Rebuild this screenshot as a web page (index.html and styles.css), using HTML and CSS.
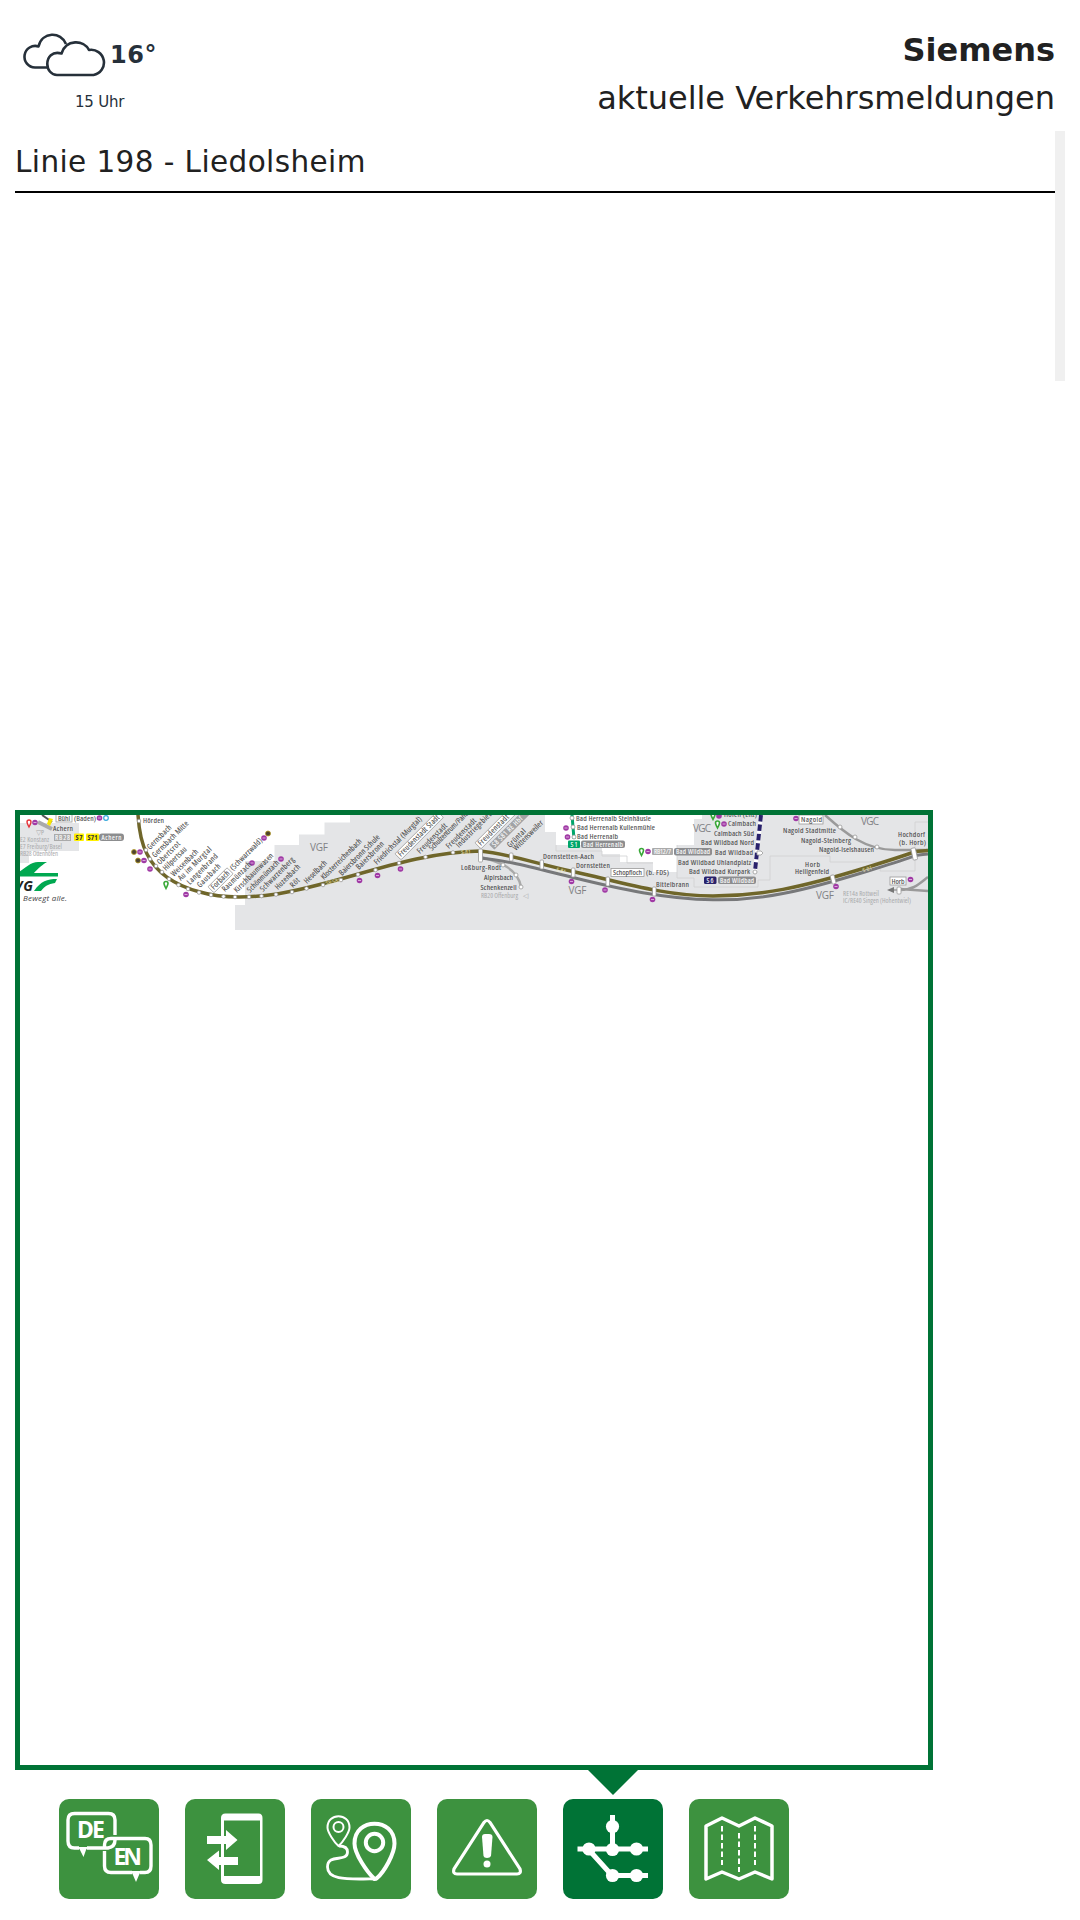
FILE: index.html
```html
<!DOCTYPE html>
<html lang="de">
<head>
<meta charset="utf-8">
<title>Siemens – aktuelle Verkehrsmeldungen</title>
<link rel="stylesheet" href="styles.css">
</head>
<body>
<header class="header">
  <div class="weather">
    <div class="weather-now">
      <svg class="weather-icon" viewBox="22 33 84 44" fill="none" stroke="#26303a" stroke-width="2.6" stroke-linejoin="round">
        <path d="M48 67.5H35A10.8 10.8 0 1 1 38.5 46.4C42 31.500 61 31 66 44"/>
        <path d="M57 75H93.500A12.300 12.300 0 1 0 89 50C84 39.500 66 39 61.500 53.500C52 51 47.300 57 47.300 64C47.300 70 51.500 75 57 75Z"/>
      </svg>
      <span class="temperature">16°</span>
    </div>
    <div class="hour">15 Uhr</div>
  </div>
  <div class="heading">
    <h1 class="stop">Siemens</h1>
    <p class="subject">aktuelle Verkehrsmeldungen</p>
  </div>
</header>
<main>
  <section class="messages">
    <h2 class="line"><span class="line-name">Linie 198 - Liedolsheim</span></h2>
    <div class="track"></div>
  </section>
  <section class="plan">
    <svg class="network" viewBox="20 815 908 115">
      <!-- tariff zones -->
      <path fill="#e4e5e7" d="M235 930V905H245V861H274.500V845H299V834.500H324.500V822.500H350V815H545V832H556V845H602V854H620V862H653V872H677V845H694V819H702V815H928V930Z"/>
      <path fill="#e4e5e7" d="M20 823H79V851H29V863H20Z"/>
      <path class="zone" d="M556 845V851H602V856H627V863H653M677 845V878H694V887H758V880H770V856H830V862H880V871H915V822H928"/>
      <g class="zone-name"><text x="310" y="851" textLength="18">VGF</text><text x="568.500" y="894" textLength="18">VGF</text><text x="693" y="831.500" textLength="18">VGC</text><text x="861" y="824.500" textLength="18">VGC</text><text x="816" y="899" textLength="18">VGF</text></g>
      <!-- side lines -->
      <path d="M481 857C499 862 518 868 521 887" fill="none" stroke="#aaa" stroke-width="2.500"/>
      <path d="M825 815C845 833 865 850 895 850H928M900 890C914 890 920 883 928 877M900 889L928 891" fill="none" stroke="#9a9a9a" stroke-width="2.500"/>
      <path d="M887 890L894 887V893Z" fill="#777"/><path d="M890 890H900" stroke="#777"/>
      <path d="M761 815L755 871" stroke="#fff" stroke-width="4"/>
      <path d="M761 815L755 871" stroke="#29226b" stroke-width="4" stroke-dasharray="6.500 3"/>
      <path d="M572 815L574 839" stroke="#00a66a" stroke-width="3"/>
      <!-- main line -->
      <path d="M480 858C505 860 530 867 575 878S665 899 713 899.800S800 892 868 871S905 857 928 854" fill="none" stroke="#77787a" stroke-width="3"/>
      <path d="M138 815C139 830 141 843 147 854C157 874 177 886 200 892C220 898 249 898 277 894C340 884 410 852 480 851C505 853 530 862 575 872S665 896 713 896S800 888 868 867S905 853 928 850.500" fill="none" stroke="#6f662a" stroke-width="3.500"/>
      <g fill="#fff" stroke="#999" stroke-width=".8">
        <circle cx="139" cy="821" r="1.800"/><circle cx="146" cy="850" r="1.800"/><circle cx="150" cy="859" r="1.800"/><circle cx="156" cy="866" r="1.800"/><circle cx="162" cy="872" r="1.800"/><circle cx="169" cy="879" r="1.800"/><circle cx="178.500" cy="885" r="1.800"/><circle cx="188" cy="889" r="1.800"/><circle cx="199" cy="892.500" r="1.800"/><circle cx="211" cy="895" r="1.800"/><circle cx="223.500" cy="896.500" r="1.800"/><circle cx="235" cy="897" r="1.800"/><circle cx="249" cy="897" r="1.800"/><circle cx="261.500" cy="896" r="1.800"/><circle cx="276" cy="894.500" r="1.800"/><circle cx="292" cy="892" r="1.800"/><circle cx="306.500" cy="888.500" r="1.800"/><circle cx="323" cy="885" r="1.800"/><circle cx="341" cy="880" r="1.800"/><circle cx="358" cy="874.500" r="1.800"/><circle cx="375.500" cy="870" r="1.800"/><circle cx="399" cy="863" r="1.800"/><circle cx="425.500" cy="857" r="1.800"/><circle cx="453" cy="852.500" r="1.800"/>
        <rect x="478.500" y="849" width="4" height="13" rx="1"/><rect x="509.500" y="853" width="3.500" height="8" rx="1"/><rect x="540" y="860" width="3.500" height="9" rx="1"/><rect x="571.500" y="868" width="3.500" height="9" rx="1"/><rect x="606" y="877" width="3.500" height="9" rx="1"/><rect x="652.500" y="887" width="3.500" height="9" rx="1"/><rect x="831" y="875" width="4" height="9" rx="1" transform="rotate(-15 833 879)"/><rect x="912" y="848" width="4.500" height="12" rx="1" transform="rotate(-12 914 854)"/><rect x="897" y="887" width="4" height="7" rx="1"/>
        <circle cx="503" cy="865" r="2"/><circle cx="516" cy="875" r="2"/><circle cx="521" cy="887" r="2"/><circle cx="840" cy="827" r="2"/><circle cx="855" cy="837" r="2"/><circle cx="877" cy="847" r="2"/><circle cx="572" cy="818" r="2"/><circle cx="573" cy="827" r="2"/><circle cx="574" cy="837" r="2"/>
        <circle cx="755" cy="872" r="2"/><path d="M757 851H761L763 853L761 855H757Z"/>
      </g>
      <g class="on-line"><text x="326" y="885" transform="rotate(-13 326 885)">S8·S81</text><text x="461" y="854">S·81</text><text transform="translate(556 871) rotate(14)">S·81</text><text transform="translate(863 872) rotate(-16)">S·81</text></g>
      <!-- interchange symbols -->
      <g fill="#a03aa5"><circle cx="35" cy="822.500" r="2.800"/><circle cx="99.500" cy="818" r="2.800"/><circle cx="140" cy="852" r="2.800"/><circle cx="144" cy="860.500" r="2.800"/><circle cx="150" cy="869" r="2.800"/><circle cx="186" cy="894.500" r="2.800"/><circle cx="252" cy="863" r="2.800"/><circle cx="264" cy="838" r="2.800"/><circle cx="281" cy="859" r="2.800"/><circle cx="359.500" cy="880.500" r="2.800"/><circle cx="377.500" cy="875.500" r="2.800"/><circle cx="400.500" cy="869" r="2.800"/><circle cx="566" cy="828" r="2.800"/><circle cx="567.500" cy="837" r="2.800"/><circle cx="571.500" cy="881.500" r="2.800"/><circle cx="605" cy="890" r="2.800"/><circle cx="652.500" cy="899.500" r="2.800"/><circle cx="648" cy="851.500" r="2.800"/><circle cx="719" cy="816" r="2.800"/><circle cx="724" cy="824" r="2.800"/><circle cx="796" cy="818.500" r="2.800"/><circle cx="836" cy="886.500" r="2.800"/><circle cx="910.500" cy="879.500" r="2.800"/></g>
      <path d="M33.500 822.500h3M98 818h3M138.500 852h3M142.500 860.500h3M148.500 869h3M184.500 894.500h3M250.500 863h3M262.500 838h3M279.500 859h3M358 880.500h3M376 875.500h3M399 869h3M564.500 828h3M566 837h3M570 881.500h3M603.500 890h3M651 899.500h3M646.500 851.500h3M722.500 824h3M794.500 818.500h3M834.500 886.500h3M909 879.500h3" stroke="#d9a6dc" stroke-width="1"/>
      <g fill="#4d4430" stroke="#b59a24" stroke-width=".8"><circle cx="134" cy="852" r="2.500"/><circle cx="138" cy="860.500" r="2.500"/><circle cx="268" cy="833.500" r="2.500"/></g>
      <circle cx="106" cy="818" r="2.300" fill="#fff" stroke="#35a8dc" stroke-width="1.200"/>
      <path d="M29 827C27.500 824 27 823 27 822A2 2 0 0 1 31 822C31 823 30.500 824 29 827Z" fill="#fff" stroke="#e5333a" stroke-width="1.400"/>
      <g fill="#fff" stroke="#39a838" stroke-width="1.600"><path id="park" d="M166 888.500C164.500 885.500 164 884.500 164 883.500A2 2 0 0 1 168 883.500C168 884.500 167.500 885.500 166 888.500Z"/><use href="#park" x="475.500" y="-33"/><use href="#park" x="551.500" y="-60.500"/><use href="#park" x="547" y="-69"/></g>
      <path d="M38 822L52 829" stroke="#aaa" stroke-width="4"/><path d="M42 815L52 822" stroke="#555" stroke-width="2"/><path d="M49 818L53 819L50 826L47 824Z" fill="#f7e600"/>
      <!-- slanted stop names -->
      <g class="stops">
        <text transform="translate(150 850) rotate(-45)" textLength="31">Gernsbach</text>
        <text transform="translate(155 858) rotate(-45)" textLength="48">Gernsbach Mitte</text>
        <text transform="translate(160 865) rotate(-45)" textLength="29">Obertsrot</text>
        <text transform="translate(166 871) rotate(-45)" textLength="30">Hilpertsau</text>
        <text transform="translate(174 877) rotate(-45)" textLength="35">Weisenbach</text>
        <text transform="translate(181 881) rotate(-45)" textLength="44">Au im Murgtal</text>
        <text transform="translate(190 885) rotate(-45)" textLength="40">Langenbrand</text>
        <text transform="translate(200 888) rotate(-45)" textLength="30">Gausbach</text>
        <g transform="translate(214 890) rotate(-45)"><rect class="frame" x="-2" y="-6.500" width="27" height="8.500" rx="1"/><text textLength="23">Forbach</text><text x="27" textLength="42">(Schwarzwald)</text></g>
        <text transform="translate(225 892) rotate(-45)" textLength="38">Raumünzach</text>
        <text transform="translate(237 893) rotate(-45)" textLength="52">Kirschbaumwasen</text>
        <text transform="translate(250 893) rotate(-45)" textLength="42">Schönmünzach</text>
        <text transform="translate(263 892) rotate(-45)" textLength="45">Schwarzenberg</text>
        <text transform="translate(278 890) rotate(-45)" textLength="32">Huzenbach</text>
        <text transform="translate(293 888) rotate(-45)" textLength="10">Röt</text>
        <text transform="translate(307 884) rotate(-45)" textLength="29">Heselbach</text>
        <text transform="translate(324 880) rotate(-45)" textLength="54">Klosterreichenbach</text>
        <text transform="translate(342 876) rotate(-45)" textLength="54">Baiersbronn Schule</text>
        <text transform="translate(359 870) rotate(-45)" textLength="36">Baiersbronn</text>
        <text transform="translate(377 865) rotate(-45)" textLength="64">Friedrichstal (Murgtal)</text>
        <g transform="translate(401 857) rotate(-45)"><rect class="frame" x="-2" y="-6.500" width="60" height="8.500" rx="1"/><text textLength="55">Freudenstadt Stadt</text></g>
        <text transform="translate(420 854) rotate(-45)" textLength="39">Freudenstadt</text>
        <text transform="translate(432 851) rotate(-45)" textLength="76">Schulzentrum/Panoramabad</text>
        <text transform="translate(449 849) rotate(-45)" textLength="39">Freudenstadt</text>
        <text transform="translate(459 848) rotate(-45)" textLength="46">Industriegebiet</text>
        <g transform="translate(481 846) rotate(-45)"><rect class="frame" x="-2" y="-6.500" width="57" height="8.500" rx="1"/><text textLength="40">Freudenstadt</text></g>
        <g transform="translate(494 848) rotate(-45)"><rect x="-1" y="-6" width="52" height="7.500" rx="1" fill="#a2a3a5"/><text class="light" x="1" textLength="40">S8 S81 RE Hbf</text></g>
        <text transform="translate(510 848) rotate(-45)" textLength="23">Grüntal</text>
        <text transform="translate(516 851) rotate(-45)" textLength="39">Wittensweiler</text>
      </g>
      <!-- upright stop names -->
      <g class="stops">
        <rect class="frame" x="56" y="811" width="16" height="11"/>
        <text x="58" y="820.500" textLength="12">Bühl</text><text x="74" y="820.500" textLength="22">(Baden)</text><text x="53" y="831" textLength="20">Achern</text><text x="143" y="823" textLength="21">Hörden</text>
        <text class="muted" x="36" y="835" textLength="8">▽P</text><text class="muted" x="20" y="842" textLength="29">E2 Konstanz</text><text class="muted" x="20" y="849" textLength="42">E7 Freiburg/Basel</text><text class="muted" x="20" y="856" textLength="38">RB28 Ottenhöfen</text>
        <rect x="54" y="834" width="17" height="7" fill="#aaa"/><text class="light" x="55" y="840" textLength="15">RB28</text>
        <rect x="74" y="833.500" width="10" height="7.500" rx="1" fill="#fff000"/><text class="route" x="75.500" y="840" textLength="7">S7</text><rect x="86" y="833.500" width="13" height="7.500" rx="1" fill="#fff000"/><text class="route" x="87.500" y="840" textLength="10">S71</text>
        <rect x="99" y="833.500" width="25" height="7.500" rx="3" fill="#8c8d8f"/><text class="light" x="101.500" y="840" textLength="20">Achern</text>
        <text x="461" y="870" textLength="40">Loßburg-Rodt</text><text x="484" y="880" textLength="29">Alpirsbach</text><text x="480.500" y="889.500" textLength="36">Schenkenzell</text><text class="muted" x="481" y="898" textLength="37">RB20 Offenburg</text><text class="muted" x="523" y="898">◁</text>
        <text x="576" y="820.500" textLength="75">Bad Herrenalb Steinhäusle</text><text x="577" y="830" textLength="78">Bad Herrenalb Kullenmühle</text><text x="577" y="839" textLength="41">Bad Herrenalb</text>
        <rect x="568" y="840.500" width="12" height="7.500" rx="1" fill="#00a66a"/><text class="light" x="570.500" y="847" textLength="7">S1</text><rect x="581" y="840.500" width="44" height="7.500" rx="2" fill="#8c8d8f"/><text class="light" x="583" y="847" textLength="40">Bad Herrenalb</text>
        <text x="543" y="859" textLength="51">Dornstetten-Aach</text><text x="576" y="868" textLength="34">Dornstetten</text><rect class="frame" x="611" y="868.500" width="33" height="8"/><text x="613" y="875" textLength="29">Schopfloch</text><text x="646" y="875" textLength="23">(b. FDS)</text><text x="656" y="887" textLength="33">Bittelbrann</text>
        <rect x="652" y="848" width="21" height="7" rx="1" fill="#aaa"/><text class="light" x="654" y="854" textLength="17">RB12/7</text><rect x="674" y="848" width="38" height="7.500" rx="2" fill="#8c8d8f"/><text class="light" x="676" y="854" textLength="34">Bad Wildbad</text><text x="715" y="855" textLength="38">Bad Wildbad</text>
        <text x="724" y="817" textLength="33">Höfen (Enz)</text><text x="728" y="826" textLength="28">Calmbach</text><text x="714" y="836" textLength="40">Calmbach Süd</text><text x="701" y="845" textLength="53">Bad Wildbad Nord</text><text x="678" y="865" textLength="73">Bad Wildbad Uhlandplatz</text><text x="689" y="874" textLength="61">Bad Wildbad Kurpark</text>
        <rect x="704" y="876.500" width="12.500" height="7.500" rx="1.500" fill="#29226b"/><text class="light" x="706.500" y="883" textLength="7">S6</text><rect x="718" y="876.500" width="38" height="7.500" rx="2" fill="#8c8d8f"/><text class="light" x="720" y="883" textLength="34">Bad Wildbad</text>
        <rect class="frame" x="799" y="815" width="24" height="9"/><text x="801" y="822" textLength="21">Nagold</text><text x="783" y="833" textLength="53">Nagold Stadtmitte</text><text x="801" y="842.500" textLength="50">Nagold-Steinberg</text><text x="819" y="852" textLength="55">Nagold-Iselshausen</text>
        <text x="805" y="867" textLength="15">Horb</text><text x="795" y="874" textLength="34">Heiligenfeld</text><text x="898" y="837" textLength="27">Hochdorf</text><text x="899" y="844.500" textLength="27">(b. Horb)</text><rect class="frame" x="890" y="877" width="16" height="8"/><text x="891.500" y="883.500" textLength="13">Horb</text>
        <text class="muted" x="843" y="896" textLength="36">RE14a Rottweil</text><text class="muted" x="843" y="903" textLength="68">IC/RE40 Singen (Hohentwiel)</text>
      </g>
      <!-- operator mark -->
      <path fill="#00a850" d="M16 873C22 872 29 862 38 862H47C40 866 36 871 34 873H58V876.500H20ZM34 891C41 881 47 879 57 879L55 883C48 884 45 886 41 891Z"/>
      <text class="operator" x="5" y="890.500" textLength="28">KVG</text><text class="slogan" x="23" y="901" textLength="44">Bewegt alle.</text>
    </svg>
  </section>
</main>
<nav class="menu">
  <button class="tile" aria-label="Sprache"><svg viewBox="0 0 100 100" fill="none" stroke="#fff" stroke-width="3.400">
    <path d="M56 36V21Q56 14.500 49.500 14.500H15.500Q9 14.500 9 21V42Q9 49 15.500 49H20M28 49H49Q56 48 56 41"/><path fill="#fff" stroke="none" d="M19 48H29L27 51L24.500 58L21 51Z"/>
    <path d="M45.500 52V67Q45.500 73.500 52 73.500H73M81 73.500H86Q92 73.500 92 67V46Q92 39.500 86 39.500H52Q45.500 39.500 45.500 46V48"/><path fill="#fff" stroke="none" d="M72 72H82L80 76L77 83L74 76Z"/>
    <text class="tile-text" x="18" y="38.500" textLength="28">DE</text><text class="tile-text" x="54.500" y="65.500" textLength="28.500">EN</text></svg></button>
  <button class="tile" aria-label="Übertragen"><svg viewBox="0 0 100 100" fill="#fff">
    <path fill-rule="evenodd" d="M40.500 14.500H73.500Q77.500 14.500 77.500 19V81Q77.500 85 73.500 85H40.500Q36 85 36 81V19Q36 14.500 40.500 14.500ZM39 21.500V77H75V21.500Z"/>
    <path d="M22 37H41V31L52.500 41L41 51V45H22ZM53 58H34V51.500L22 61L34 71V66H53Z"/></svg></button>
  <button class="tile" aria-label="Route"><svg viewBox="0 0 100 100" fill="none" stroke="#fff">
    <path stroke-width="2" d="M27.500 47C23 43 16.500 33 16.500 28.500C16.500 13.500 38.500 13.500 38.500 28.500C38.500 33 32 43 27.500 47Z"/><circle cx="27.500" cy="28" r="5" stroke-width="2"/>
    <path stroke-width="2.800" d="M28 47C33 47 36.500 49 36.500 53C36.500 64 16.500 54 16.500 68C16.500 83 43 79.500 64 80"/>
    <path stroke-width="4" stroke-linejoin="round" d="M63.500 80C56 73 43.500 55 43.500 44.500C43.500 18 83.500 18 83.500 44.500C83.500 55 73 73 66 79Q65 80 63.500 80Z"/><circle cx="63.500" cy="43.500" r="8.700" stroke-width="4"/></svg></button>
  <button class="tile" aria-label="Meldungen"><svg viewBox="0 0 100 100">
    <path fill="none" stroke="#fff" stroke-width="3.200" d="M47 23.500Q50 19.500 53 23.500L83 70Q84.500 75 80 75H20Q15.500 75 17 70Z"/>
    <path fill="#fff" d="M45 38Q45 35 48 35H52Q55.500 35 55.500 38L54 57Q53 59 50 59Q47 59 46.500 57Z"/><circle cx="50" cy="65" r="3.500" fill="#fff"/></svg></button>
  <button class="tile tile-active" aria-label="Liniennetz"><svg viewBox="0 0 100 100" fill="#fff" stroke="#fff">
    <path fill="none" stroke-width="5" d="M49.500 16V50M14.500 50H85M26 51L49 76.500H85"/>
    <g stroke="none"><circle cx="49.500" cy="27.500" r="6.600"/><circle cx="26" cy="50" r="6.600"/><circle cx="49.500" cy="50.500" r="6.600"/><circle cx="73.500" cy="50" r="6.600"/><circle cx="49.500" cy="76.500" r="6.600"/><circle cx="73.500" cy="76.500" r="6.600"/></g></svg></button>
  <button class="tile" aria-label="Karte"><svg viewBox="0 0 100 100" fill="none" stroke="#fff" stroke-linejoin="round">
    <path stroke-width="3.500" d="M17 27L33 19L50 27L66 19L83 27V80L66 73L50 80L33 73L17 80Z"/>
    <path stroke-width="2" stroke-dasharray="5.500 3" d="M33 27V66M66 27V66M50 34V73"/></svg></button>
</nav>
</body>
</html>
```
FILE: styles.css
```css
* { box-sizing: border-box; }
body {
  margin: 0;
  width: 1080px;
  height: 1920px;
  overflow: hidden;
  background: #fff;
  color: #212121;
  font-family: Verdana, "DejaVu Sans", sans-serif;
}
.header {
  display: flex;
  justify-content: space-between;
  height: 131px;
  padding: 26px 25px 0 22px;
}
.weather { width: 160px; padding-top: 7px; color: #26303a; }
.weather-now { display: flex; align-items: center; gap: 4px; height: 44px; }
.weather-icon { width: 84px; height: 44px; flex: none; }
.temperature { font-size: 24px; font-weight: bold; line-height: 44px; letter-spacing: 0.6px; }
.hour { padding: 15px 0 0 53px; font-size: 15px; line-height: 20px; letter-spacing: -0.2px; }
.heading { text-align: right; }
.stop, .subject, .line { margin: 0; font-weight: normal; }
.stop { font-size: 32px; font-weight: bold; line-height: 48px; }
.subject { font-size: 32px; line-height: 48px; letter-spacing: -0.03px; }
.messages { display: flex; height: 250px; padding-left: 15px; }
.line {
  width: 1040px;
  height: 62px;
  border-bottom: 2px solid #000;
  font-size: 29.5px;
  line-height: 63px;
  letter-spacing: 0.4px;
}
.track { width: 10px; background: #f0f0f0; }
.plan {
  position: relative;
  width: 918px;
  height: 960px;
  margin: 429px 0 0 15px;
  border: 5px solid #007336;
}
.plan::after {
  content: "";
  position: absolute;
  top: 954px;
  left: 567px;
  width: 52px;
  height: 26px;
  background: #007336;
  clip-path: polygon(0 0, 100% 0, 50% 100%);
}
.network { display: block; width: 908px; height: 115px; overflow: hidden; }
.network text { font-family: "Open Sans", sans-serif; }
.zone { fill: none; stroke: #cfd0d2; stroke-width: 0.8; }
.zone-name { fill: #808184; font-size: 10px; }
.stops { fill: #4a4a4a; font-size: 7.7px; font-stretch: 82%; }
.stops text { stroke: #4a4a4a; stroke-width: 0.08px; }
.stops .muted { fill: #a9aaac; stroke: none; font-size: 6.8px; }
.stops .light { fill: #fff; stroke: #fff; font-size: 7px; }
.stops .route { fill: #333; font-size: 7px; font-weight: bold; }
.frame { fill: #fff; stroke: #999; stroke-width: 0.8; }
.on-line { fill: #eee8b8; font-size: 5px; }
.network .operator { fill: #222; font-size: 14px; font-weight: bold; font-style: italic; }
.network .slogan { fill: #444; font-size: 8px; font-style: italic; }
.menu { display: flex; gap: 26px; padding: 29px 0 0 59px; }
.tile {
  width: 100px;
  height: 100px;
  padding: 0;
  border: 0;
  border-radius: 10px;
  background: #3d923f;
}
.tile svg { display: block; width: 100px; height: 100px; }
.tile-active { background: #007336; }
.tile-text {
  fill: #fff;
  stroke: none;
  font: bold 23px "Noto Sans", sans-serif;
}
```
